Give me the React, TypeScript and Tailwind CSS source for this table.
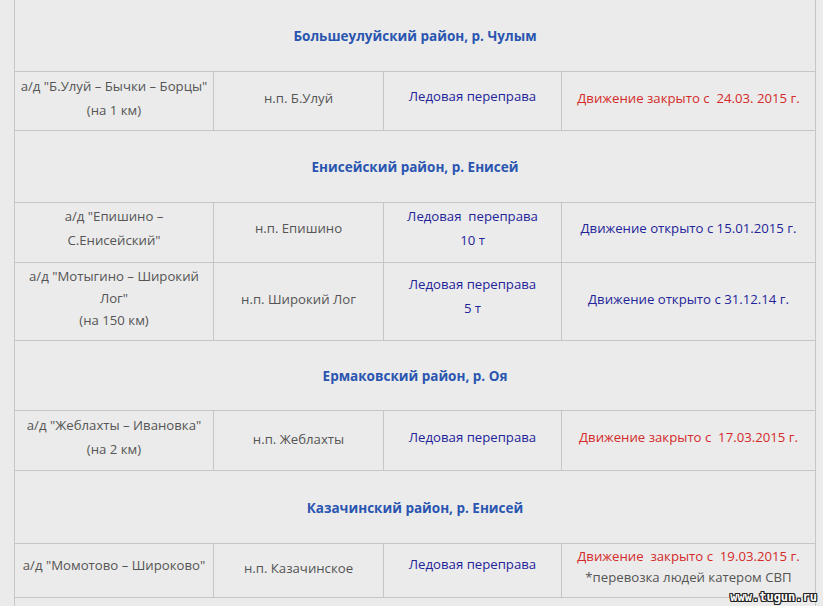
import React from "react";

const font = { fontFamily: '"Open Sans", "Liberation Sans", sans-serif' };

function Header({ text, h }: { text: string; h: string }) {
  return (
    <div className={`col-span-4 flex items-center justify-center border-b border-[#c6c6c6] ${h} pt-[2px]`}>
      <span className="text-[13.5px] font-bold text-[#2a55b0]">{text}</span>
    </div>
  );
}

function Cell({ children, last, pb }: { children: React.ReactNode; last?: boolean; pb: string }) {
  return (
    <div
      className={`flex flex-col items-center justify-center text-center text-[13.2px] leading-[24px] ${pb} ${last ? "" : "border-r border-[#c6c6c6]"}`}
    >
      {children}
    </div>
  );
}

function Row({ h, children }: { h: string; children: React.ReactNode }) {
  return (
    <div className={`col-span-4 grid grid-cols-[199px_170px_178px_253px] border-b border-[#c6c6c6] ${h}`}>
      {children}
    </div>
  );
}

export default function App() {
  const gray = "text-[#555555]";
  const navy = "text-[#24249a]";
  const red = "text-[#d42a2a]";
  return (
    <div className="relative h-[606px] w-[823px] overflow-hidden bg-[#ebebeb]" style={font}>
      <div className="ml-[14px] w-[802px] border-l border-r border-[#c6c6c6] grid grid-cols-[199px_170px_178px_253px]">
        <Header text="Большеулуйский район, р. Чулым" h="h-[72px]" />
        <Row h="h-[59px]">
          <Cell pb="pb-[6px]">
            <span className={gray}>а/д "Б.Улуй – Бычки – Борцы"</span>
            <span className={gray}>(на 1 км)</span>
          </Cell>
          <Cell pb="pb-[6px]">
            <span className={gray}>н.п. Б.Улуй</span>
          </Cell>
          <Cell pb="pb-[10px]">
            <span className={navy}>Ледовая переправа</span>
          </Cell>
          <Cell last pb="pb-[6px]">
            <span className={red}>Движение закрыто с&nbsp; 24.03. 2015 г.</span>
          </Cell>
        </Row>
        <Header text="Енисейский район, р. Енисей" h="h-[72px]" />
        <Row h="h-[60px]">
          <Cell pb="pb-[10px]">
            <span className={gray}>а/д "Епишино –</span>
            <span className={gray}>С.Енисейский"</span>
          </Cell>
          <Cell pb="pb-[10px]">
            <span className={gray}>н.п. Епишино</span>
          </Cell>
          <Cell pb="pb-[10px]">
            <span className={navy}>Ледовая&nbsp; переправа</span>
            <span className={navy}>10 т</span>
          </Cell>
          <Cell last pb="pb-[10px]">
            <span className={navy}>Движение открыто с 15.01.2015 г.</span>
          </Cell>
        </Row>
        <Row h="h-[78px]">
          <Cell pb="pb-[8px]">
            <div className="leading-[22px]">
              <div className={gray}>а/д "Мотыгино – Широкий</div>
              <div className={gray}>Лог"</div>
              <div className={gray}>(на 150 км)</div>
            </div>
          </Cell>
          <Cell pb="pb-[6px]">
            <span className={gray}>н.п. Широкий Лог</span>
          </Cell>
          <Cell pb="pb-[12px]">
            <span className={navy}>Ледовая переправа</span>
            <span className={navy}>5 т</span>
          </Cell>
          <Cell last pb="pb-[6px]">
            <span className={navy}>Движение открыто с 31.12.14 г.</span>
          </Cell>
        </Row>
        <Header text="Ермаковский район, р. Оя" h="h-[70px]" />
        <Row h="h-[60px]">
          <Cell pb="pb-[8px]">
            <span className={gray}>а/д "Жеблахты – Ивановка"</span>
            <span className={gray}>(на 2 км)</span>
          </Cell>
          <Cell pb="pb-[4px]">
            <span className={gray}>н.п. Жеблахты</span>
          </Cell>
          <Cell pb="pb-[8px]">
            <span className={navy}>Ледовая переправа</span>
          </Cell>
          <Cell last pb="pb-[8px]">
            <span className={red}>Движение закрыто с&nbsp; 17.03.2015 г.</span>
          </Cell>
        </Row>
        <Header text="Казачинский район, р. Енисей" h="h-[73px]" />
        <Row h="h-[54px]">
          <Cell pb="pb-[11px]">
            <span className={gray}>а/д "Момотово – Широково"</span>
          </Cell>
          <Cell pb="pb-[6px]">
            <span className={gray}>н.п. Казачинское</span>
          </Cell>
          <Cell pb="pb-[13px]">
            <span className={navy}>Ледовая переправа</span>
          </Cell>
          <Cell last pb="pb-[7px]">
            <div className="leading-[21px]">
              <div className={red}>Движение&nbsp; закрыто с&nbsp; 19.03.2015 г.</div>
              <div className={gray}>*перевозка людей катером СВП</div>
            </div>
          </Cell>
        </Row>
        <div className="col-span-4 h-[40px]" />
      </div>
      <div
        className="absolute right-[6px] top-[589px] text-[12px] font-bold leading-[16px] text-white"
        style={{
          fontFamily: '"DejaVu Sans Mono", monospace',
          textShadow:
            "1px 0 0 #222, -1px 0 0 #222, 0 1px 0 #222, 0 -1px 0 #222, 1px 1px 0 #222, -1px -1px 0 #222, 1px -1px 0 #222, -1px 1px 0 #222",
        }}
      >
        www.tugun.ru
      </div>
    </div>
  );
}
